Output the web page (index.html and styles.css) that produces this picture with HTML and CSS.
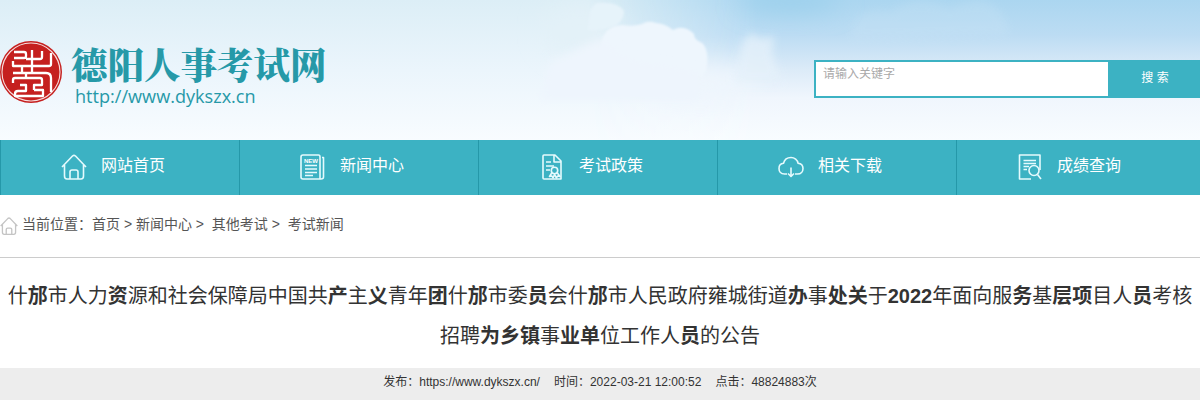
FILE: index.html
```html
<!DOCTYPE html>
<html lang="zh-CN">
<head>
  <meta charset="UTF-8">
  <title>德阳人事考试网</title>
  <link rel="stylesheet" href="styles.css">
</head>
<body>

<div class="header">
  <svg class="sky" viewBox="0 0 1200 140" preserveAspectRatio="none" aria-hidden="true">
    <defs>
      <linearGradient id="base" x1="0" y1="0" x2="0" y2="1">
        <stop offset="0" stop-color="#dceef6"/>
        <stop offset="0.5" stop-color="#ebf5fc"/>
        <stop offset="1" stop-color="#f8fcff"/>
      </linearGradient>
      <linearGradient id="blue" x1="0" y1="0" x2="0" y2="1">
        <stop offset="0" stop-color="#abd6f0"/>
        <stop offset="0.25" stop-color="#bcdcf3"/>
        <stop offset="0.5" stop-color="#dcebf8"/>
        <stop offset="0.7" stop-color="#f0f6fd"/>
        <stop offset="1" stop-color="#f8fcff"/>
      </linearGradient>
      <linearGradient id="fade">
        <stop offset="0.49" stop-color="#000"/>
        <stop offset="0.63" stop-color="#fff"/>
      </linearGradient>
      <mask id="right"><rect width="1200" height="140" fill="url(#fade)"/></mask>
      <linearGradient id="puff" x1="0" y1="0" x2="0" y2="1">
        <stop offset="0" stop-color="#eef6fd"/>
        <stop offset="0.6" stop-color="#eff6fd"/>
        <stop offset="1" stop-color="#f3f9fe" stop-opacity="0"/>
      </linearGradient>
      <filter id="soft" x="-40%" y="-40%" width="180%" height="180%"><feGaussianBlur stdDeviation="4"/></filter>
      <filter id="wide" x="-60%" y="-100%" width="220%" height="300%"><feGaussianBlur stdDeviation="12"/></filter>
      <filter id="edge"><feGaussianBlur stdDeviation="0.8"/></filter>
    </defs>
    <rect width="1200" height="140" fill="url(#base)"/>
    <rect width="1200" height="140" fill="url(#blue)" mask="url(#right)"/>
    <ellipse cx="790" cy="0" rx="50" ry="12" fill="#9bd0ec" filter="url(#wide)"/>
    <path d="M850 40Q852 5 890 12Q915 -8 950 8Q1000 -15 1010 35Z" fill="#cfe6f6" opacity="0.25" filter="url(#soft)"/>
    <ellipse cx="580" cy="30" rx="36" ry="26" fill="#e3f1f8" filter="url(#wide)"/>
    <ellipse cx="700" cy="84" rx="60" ry="18" fill="#eff6fd" filter="url(#wide)"/>
    <path d="M590 12Q594 1 602 3Q618 2 624 11Q624 19 617 25Q600 32 588 30Z" fill="#e6f3fa" filter="url(#edge)"/>
    <path d="M600 60Q600 40 604 35Q608 26 622 25Q633 27 642 24Q648 20 656 23Q666 24 673 30Q684 24 694 34Q694 40 702 43Q710 50 706 72Q690 92 640 90H600Z" fill="#eef6fd" filter="url(#edge)"/>
    <path d="M550 62L600 38L630 60L700 72V100H540Z" fill="#eef5fd" filter="url(#soft)"/>
    <path d="M742 42L752 33L761 39L774 36L772 54L782 82H734Z" fill="#e5f1fa" opacity="0.8" filter="url(#soft)"/>
  </svg>
  <div class="logo">
    <svg class="seal" viewBox="0 0 64 64" fill="none">
      <circle cx="31" cy="32" r="31" fill="#c5201f"/>
      <circle cx="31" cy="32" r="29" stroke="#f7dddd" stroke-width="1.1"/>
      <path d="M14 12H24Q26 12 26 14V16Q26 18 24 18H14M32 10V32M42 11V17Q42 19 40 19H26M51 13V24Q51 26 49 26H13V21M22 26V32M13 33H46Q51 33 51 38V52M26 33V38H15Q13 38 13 40V43M26 38H40Q42 38 42 40V45H34V50M20 45H26V51H18Q15 51 15 54V56H43V50H34" stroke="#fff" stroke-width="2.300" stroke-linejoin="round"/>
    </svg>
    <div class="logo-text">
      <div class="logo-name">德阳人事考试网</div>
      <div class="logo-url">http://www.dykszx.cn</div>
    </div>
  </div>
  <form class="search">
    <input class="search-input" type="text" placeholder="请输入关键字">
    <button class="search-btn" type="button">搜 索</button>
  </form>
</div>

<div class="nav">
  <a class="nav-item">
    <svg class="icon" viewBox="0 0 26 26"><path d="M1 13L11.500 2Q13 .8 14.500 2L25 13M3.500 11V22Q3.500 25 6 25H20Q22.500 25 22.500 22V11M9 25V18Q9 16 11 16H15Q17 16 17 18V25"/></svg>
    <span>网站首页</span>
  </a>
  <a class="nav-item">
    <svg class="icon" viewBox="0 0 26 26"><path d="M3 1H18.500Q20 1 20 3V25H3Q1 25 1 23V3Q1 1 3 1ZM22 3.500H23.500V23Q23.500 25 21 25H19M5 11.500H17M5 15H17M5 18.500H17M5 21.500H13"/><text class="icon-text" x="4" y="8.500">NEW</text></svg>
    <span>新闻中心</span>
  </a>
  <a class="nav-item">
    <svg class="icon" viewBox="0 0 26 26"><path d="M10 25H5Q4 25 4 24V2Q4 1 5 1H16L22 7V25H20M15 1V8H22M7 8H12M7 12H15M7 16H11M10 25H20"/><circle cx="15.500" cy="16.500" r="3.200"/><path d="M13 18.500L10.500 22.500L13 22L14 24L15.500 20.500L17.500 24L18.500 22L21 22.500L18 18.500"/></svg>
    <span>考试政策</span>
  </a>
  <a class="nav-item">
    <svg class="icon" viewBox="0 0 26 26"><path d="M9 20H6.500C2.500 20 1 17 1 14.500C1 11.500 3 9.500 5.500 9.300C6.500 5.500 9.500 3.500 13 3.500C16.500 3.500 19.500 6 20 9.200C23 9.500 25 11.500 25 14.500C25 17.500 23 20 19.500 20H17M13 13.500V22.500M10 19.500L13 22.500L16 19.500"/></svg>
    <span>相关下载</span>
  </a>
  <a class="nav-item">
    <svg class="icon" viewBox="0 0 26 26"><path d="M14 25H2.500V1H23V16M6.500 6.500H19M6.500 9.500H19M6.500 12.500H12M6.500 15.500H10"/><circle cx="17" cy="16.500" r="5"/><path d="M20.500 20.500L24 25"/></svg>
    <span>成绩查询</span>
  </a>
</div>

<div class="crumbs">
  <svg class="crumb-icon" viewBox="0 0 26 26"><path d="M1 13L11.500 2Q13 .8 14.500 2L25 13M3.500 11V22Q3.500 25 6 25H20Q22.500 25 22.500 22V11M9 25V18Q9 16 11 16H15Q17 16 17 18V25"/></svg>
  <span>当前位置：<a>首页</a> &gt; <a>新闻中心</a> &gt;&nbsp; <a>其他考试</a> &gt;&nbsp; <a>考试新闻</a></span>
</div>

<h1 class="title">什<b>邡</b>市人力<b>资</b>源和社会保障局中国共<b>产</b>主<b>义</b>青年<b>团</b>什<b>邡</b>市委<b>员</b>会什<b>邡</b>市人民政府雍城街道<b>办</b>事<b>处关</b>于<b>2022</b>年面向服<b>务</b>基<b>层项</b>目人<b>员</b>考核招聘<b>为乡镇</b>事<b>业单</b>位工作人<b>员</b>的公告</h1>

<div class="info">
  <span>发布：https://www.dykszx.cn/</span>
  <span>时间：2022-03-21 12:00:52</span>
  <span>点击：48824883次</span>
</div>

</body>
</html>
```

FILE: styles.css
```css
* {
  box-sizing: border-box;
}
body {
  margin: 0;
  width: 1200px;
  font-family: "Liberation Sans", "Noto Sans CJK SC", sans-serif;
  font-size: 14px;
  color: #333;
  background: #fff;
}
.header {
  position: relative;
  display: flex;
  justify-content: space-between;
  height: 140px;
  overflow: hidden;
}
.sky {
  position: absolute;
  left: 0;
  top: 0;
  width: 100%;
  height: 100%;
}
.logo {
  position: relative;
  display: flex;
  padding-top: 40px;
}
.seal {
  width: 64px;
  height: 64px;
}
.logo-text {
  padding: 0 0 0 7px;
  color: #2699a8;
}
.logo-name {
  font: 900 36.500px/46px "Noto Serif CJK SC", "Noto Sans CJK SC", serif;
}
.logo-url {
  padding-left: 4px;
  font: 18.100px/20px "Open Sans", sans-serif;
}
.search {
  position: relative;
  display: flex;
  width: 386px;
  height: 38px;
  margin-top: 60px;
}
.search-input {
  width: 294px;
  border: 2px solid #3cb2c3;
  border-right: 0;
  padding: 0 7px 14px;
  font: 12px "Noto Sans CJK SC", sans-serif;
  background: #fff;
}
.search-input::placeholder {
  color: #a9a9a9;
}
.search-btn {
  flex: 1;
  border: 0;
  padding: 0 0 6px 2px;
  color: #fff;
  font: 12px "Liberation Sans", "Noto Sans CJK SC", sans-serif;
  background: #3cb2c3;
}
.nav {
  display: flex;
  width: 1200px;
  height: 55px;
  background: #3cb2c3;
}
.nav-item {
  display: flex;
  width: 239px;
  padding: 14px 0 0 60px;
  gap: 14px;
  border-left: 1px solid #2598a9;
  color: #fff;
  font-size: 16px;
  line-height: 24px;
}
.nav-item:last-child {
  width: 244px;
}
.icon {
  width: 26px;
  height: 26px;
  fill: none;
  stroke: #e5fafd;
  stroke-width: 1.600;
  stroke-linejoin: round;
}
.icon-text {
  font: bold 6px "Liberation Sans", sans-serif;
  fill: #fff;
  stroke: none;
}
.crumbs {
  display: flex;
  gap: 4px;
  height: 63px;
  padding-top: 19px;
  border-bottom: 1px solid #ccc;
  color: #555;
  line-height: 20px;
}
.crumb-icon {
  width: 18px;
  height: 18px;
  margin-top: 3px;
  fill: none;
  stroke: #c4c4c4;
  stroke-width: 1.900;
}
.title {
  margin: 0;
  padding: 18px 0 12px;
  height: 110px;
  font-size: 20px;
  font-weight: 400;
  line-height: 40px;
  text-align: center;
}
.title b {
  font-weight: 700;
}
.info {
  display: flex;
  justify-content: center;
  gap: 14px;
  height: 32px;
  font-size: 12px;
  line-height: 28px;
  background: #ededed;
}
```
